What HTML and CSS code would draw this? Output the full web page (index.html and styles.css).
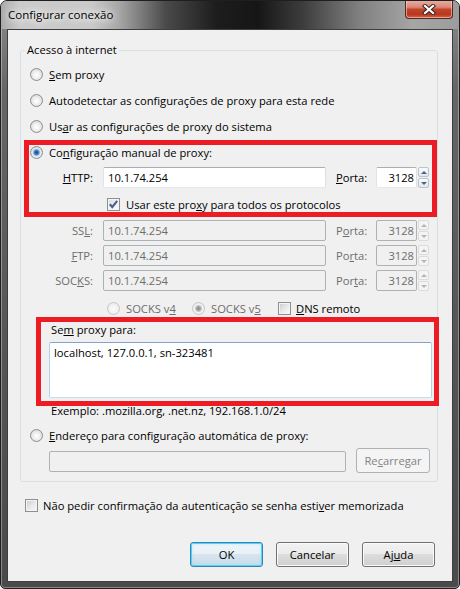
FILE: index.html
```html
<!DOCTYPE html>
<html lang="pt">
<head>
<meta charset="utf-8">
<title>Configurar conexão</title>
<link rel="stylesheet" href="styles.css">
</head>
<body>
<div class="window">
  <div class="titlebar">
    <span class="title">Configurar conexão</span>
    <div class="close">
      <svg width="14" height="11" viewBox="0 0 14 11"><path d="M3 2 L11 9 M11 2 L3 9" stroke="#3a2525" stroke-width="4.2" stroke-linecap="square" fill="none"/><path d="M3 2 L11 9 M11 2 L3 9" stroke="#ffffff" stroke-width="2.2" stroke-linecap="square" fill="none"/></svg>
    </div>
  </div>
  <div class="client">
    <div class="group">
      <span class="legend">Acesso à internet</span>
      <div class="opt"><span class="radio"></span><span><u>S</u>em proxy</span></div>
      <div class="opt"><span class="radio"></span><span>Autodetectar as confi<u>g</u>urações de proxy para esta rede</span></div>
      <div class="opt"><span class="radio"></span><span>Us<u>a</u>r as configurações de proxy do sistema</span></div>
      <div class="mark mark1">
        <div class="opt"><span class="radio on"></span><span>Co<u>n</u>figuração manual de proxy:</span></div>
        <div class="prow first">
          <span class="plabel"><u>H</u>TTP:</span>
          <span class="field">10.1.74.254</span>
          <span class="porta"><u>P</u>orta:</span>
          <span class="field port">3128</span>
          <span class="spin"><span class="sb"><span class="up"></span></span><span class="sb"><span class="down"></span></span></span>
        </div>
        <div class="crow"><span class="chk on"><svg width="11" height="11" viewBox="0 0 11 11"><path d="M1.8 5.2 L4.3 8 L9.2 1.8" fill="none" stroke="#4b5f94" stroke-width="2.1"/></svg></span><span>Usar este pro<u>x</u>y para todos os protocolos</span></div>
      </div>
      <div class="prow dis ssl">
        <span class="plabel">SS<u>L</u>:</span>
        <span class="field">10.1.74.254</span>
        <span class="porta">P<u>o</u>rta:</span>
        <span class="field port">3128</span>
        <span class="spin"><span class="sb"><span class="up"></span></span><span class="sb"><span class="down"></span></span></span>
      </div>
      <div class="prow dis">
        <span class="plabel"><u>F</u>TP:</span>
        <span class="field">10.1.74.254</span>
        <span class="porta">Po<u>r</u>ta:</span>
        <span class="field port">3128</span>
        <span class="spin"><span class="sb"><span class="up"></span></span><span class="sb"><span class="down"></span></span></span>
      </div>
      <div class="prow dis">
        <span class="plabel">SOC<u>K</u>S:</span>
        <span class="field">10.1.74.254</span>
        <span class="porta">Por<u>t</u>a:</span>
        <span class="field port">3128</span>
        <span class="spin"><span class="sb"><span class="up"></span></span><span class="sb"><span class="down"></span></span></span>
      </div>
      <div class="srow">
        <span class="sitem v4 dis"><span class="radio dis"></span><span>SOCKS v<u>4</u></span></span>
        <span class="sitem v5 dis"><span class="radio dis on"></span><span>SOCKS v<u>5</u></span></span>
        <span class="sitem"><span class="chk"></span><span><u>D</u>NS remoto</span></span>
      </div>
      <div class="mark mark2">
        <div class="nlabel">Se<u>m</u> proxy para:</div>
        <div class="area">localhost, 127.0.0.1, sn-323481</div>
      </div>
      <div class="example">Exemplo: .mozilla.org, .net.nz, 192.168.1.0/24</div>
      <div class="opt auto"><span class="radio"></span><span><u>E</u>ndereço para configuração automática de proxy:</span></div>
      <div class="urow">
        <span class="field url dis"></span>
        <span class="btn disabled">Re<u>c</u>arregar</span>
      </div>
    </div>
    <div class="crow bottom"><span class="chk"></span><span>Não pedir confirmação da autenticação se senha esti<u>v</u>er memorizada</span></div>
    <div class="buttons">
      <span class="btn default">OK</span>
      <span class="btn">Cancelar</span>
      <span class="btn">Aj<u>u</u>da</span>
    </div>
  </div>
</div>
</body>
</html>
```
FILE: styles.css
```css
* { box-sizing: border-box; }
html, body { margin: 0; padding: 0; }
body {
  width: 460px;
  height: 589px;
  overflow: hidden;
  background: #ffffff;
  font-family: "Open Sans", "Noto Sans", sans-serif;
  font-size: 11.2px;
  color: #000;
}
u { text-decoration: underline; text-underline-offset: 1px; text-decoration-thickness: 1px; }

.window {
  width: 460px;
  height: 589px;
  border: 1px solid #1f1f1f;
  border-radius: 7px 7px 5px 5px;
  background: linear-gradient(to bottom, #8d8d8d 0, #666666 15%, #555555 60%, #4a4a4a 100%);
  box-shadow: inset 0 0 0 1px rgba(255,255,255,0.35);
  overflow: hidden;
  display: flex;
  flex-direction: column;
}
.titlebar {
  height: 28px;
  flex: none;
  display: flex;
  align-items: flex-start;
  background: linear-gradient(to right, #a9a9a9 0, #cbcbcb 4%, #c9c9c9 20%, #a5a5a5 26%, #4a4a4a 36%, #1d1d1d 47%, #161616 56%, #3d3d3d 66%, #7f7f7f 78%, #a6a6a6 90%, #9c9c9c 100%);
}
.title {
  padding-left: 7px;
  line-height: 28px;
  font-size: 11.5px;
  color: #000;
  text-shadow: 0 0 6px #fff, 0 0 10px rgba(255,255,255,0.9), 0 0 14px rgba(255,255,255,0.7);
}
.close {
  margin-left: auto;
  margin-right: 6px;
  margin-top: -1px;
  width: 48px;
  height: 19px;
  border: 1px solid #4e2a24;
  border-top: none;
  border-radius: 0 0 4px 4px;
  background: linear-gradient(to bottom, #e8b1a6 0, #d98876 40%, #c2442b 52%, #b8371f 80%, #d46448 100%);
  box-shadow: inset 0 0 0 1px rgba(255,220,210,0.55);
  display: flex;
  align-items: center;
  justify-content: center;
}

.client {
  height: 553px;
  flex: none;
  margin: 0 6px;
  border: 1px solid #3e3e3e;
  background: #f0f0f0;
  display: flex;
  flex-direction: column;
}

.group {
  position: relative;
  margin: 20px 14px 0 12px;
  border: 1px solid #d5dfe5;
  border-radius: 3px;
  padding: 10px 0 8px 0;
}
.legend {
  position: absolute;
  top: -9px;
  left: 4px;
  padding: 0 2px;
  line-height: 16px;
  background: #f0f0f0;
}

.opt {
  display: flex;
  align-items: center;
  height: 26px;
  padding-left: 9px;
  gap: 6px;
}
.radio {
  flex: none;
  width: 13px;
  height: 13px;
  border-radius: 50%;
  border: 1px solid #8e8f8f;
  background: radial-gradient(circle at 50% 55%, #ffffff 0, #f3f3f3 35%, #dadada 75%, #c8c8c8 100%);
}
.radio.on {
  background:
    radial-gradient(circle at 50% 50%, #1a4f93 0, #2b6bb6 1.6px, #5c9ad8 2.6px, #a9cdf1 3.4px, rgba(169,205,241,0) 4.1px),
    radial-gradient(circle at 50% 55%, #ffffff 0, #f3f3f3 35%, #dadada 75%, #c8c8c8 100%);
}
.radio.dis {
  border-color: #c5c5c5;
  background: radial-gradient(circle at 50% 55%, #fbfbfb 0, #f2f2f2 50%, #e6e6e6 100%);
}
.radio.dis.on {
  background:
    radial-gradient(circle at 50% 50%, #8a8a8a 0, #a3a3a3 1.8px, #c7c7c7 3px, rgba(200,200,200,0) 4px),
    radial-gradient(circle at 50% 55%, #fbfbfb 0, #f2f2f2 50%, #e6e6e6 100%);
}

.mark { position: relative; }
.mark::after {
  content: "";
  position: absolute;
  border: 5px solid #ed1c24;
  pointer-events: none;
}
.mark1::after { top: 1px; left: 3px; right: 0; bottom: -5px; }
.mark2 { margin-top: 1px; }
.mark2::after { top: 0; left: 15px; right: -2px; bottom: -8px; }

.prow {
  display: flex;
  align-items: center;
  height: 21px;
  margin-top: 4px;
}
.prow.first { margin-top: 2px; }
.prow.ssl { margin-top: 8px; }
.plabel {
  width: 72px;
  text-align: right;
  margin-right: 10px;
}
.field {
  display: block;
  width: 223px;
  height: 21px;
  border: 1px solid;
  border-color: #abadb3 #dbdfe6 #e3e9ef #e2e3ea;
  border-radius: 2px;
  background: #ffffff;
  padding: 0 4px;
  line-height: 19px;
  white-space: nowrap;
}
.porta {
  width: 40px;
  margin-left: 10px;
}
.field.port {
  width: 41px;
  text-align: right;
  padding: 0 2px 0 0;
}
.spin {
  width: 11px;
  height: 21px;
  margin-left: 1px;
  display: flex;
  flex-direction: column;
  gap: 1px;
}
.sb {
  flex: 1;
  border: 1px solid #bcc3cc;
  border-radius: 2px;
  background: linear-gradient(to bottom, #fafbfc, #e2e7ee);
  display: flex;
  align-items: center;
  justify-content: center;
}
.up { width: 0; height: 0; border-left: 3px solid transparent; border-right: 3px solid transparent; border-bottom: 3px solid #4d6185; }
.down { width: 0; height: 0; border-left: 3px solid transparent; border-right: 3px solid transparent; border-top: 3px solid #4d6185; }

.dis { color: #6d6d6d; }
.dis .field, .field.dis {
  background: #f0f0f0;
  border-color: #adb2b5;
  color: #6d6d6d;
}
.dis .sb { border-color: #dcdcdc; background: #f4f4f4; }
.dis .up { border-bottom-color: #b5b5b5; }
.dis .down { border-top-color: #b5b5b5; }

.crow {
  display: flex;
  align-items: center;
  height: 16px;
  margin-top: 8px;
  padding-left: 86px;
  gap: 6px;
}
.chk {
  flex: none;
  width: 13px;
  height: 13px;
  border: 1px solid #8f8f8f;
  background: linear-gradient(135deg, #c6cacf 0, #e9eaec 55%, #f8f8f8 100%);
  box-shadow: inset 0 0 0 1px #f4f4f4;
  display: flex;
  align-items: center;
  justify-content: center;
}
.chk.on {
  background: linear-gradient(135deg, #d7dadf 0, #f0f1f3 55%, #fbfbfb 100%);
}

.srow {
  display: flex;
  align-items: center;
  height: 16px;
  margin-top: 9px;
  padding-left: 86px;
}
.sitem { display: flex; align-items: center; gap: 6px; }
.sitem.v4 { width: 85px; }
.sitem.v5 { width: 86px; }
.sitem .chk { margin-right: -1px; }

.nlabel {
  padding: 5px 0 0 30px;
  line-height: 16px;
}
.area {
  margin: 4px 0 0 28px;
  width: 383px;
  height: 56px;
  border: 1px solid;
  border-color: #7ea4cf #b7cfe8 #c7dbef #b7cfe8;
  border-radius: 2px;
  background: #fff;
  padding: 2px 4px;
  line-height: 16px;
}
.example {
  margin-top: 5px;
  padding-left: 30px;
  line-height: 16px;
}
.opt.auto { margin-top: 3px; }

.urow {
  display: flex;
  align-items: flex-end;
  height: 25px;
  padding-left: 28px;
}
.field.url {
  width: 297px;
  margin-bottom: 1px;
}

.btn {
  display: flex;
  align-items: center;
  justify-content: center;
  width: 73px;
  height: 25px;
  border: 1px solid #707070;
  border-radius: 3px;
  background: linear-gradient(to bottom, #f2f2f2 0, #ebebeb 49%, #dddddd 50%, #cfcfcf 100%);
  box-shadow: inset 0 0 0 1px #fbfbfb;
}
.btn.disabled {
  width: 74px;
  margin-left: 10px;
  border-color: #adb2b5;
  background: #f4f4f4;
  box-shadow: none;
  color: #838383;
}
.btn.default {
  border-color: #3c7fb1;
  box-shadow: inset 0 0 0 1px #48d8fb, inset 0 0 3px 1px rgba(150,220,250,0.5);
  background: linear-gradient(to bottom, #f0f6fa 0, #e8f0f6 49%, #d8e5ef 50%, #c9dbe9 100%);
}

.crow.bottom {
  margin-top: 15px;
  padding-left: 17px;
  gap: 5px;
}
.buttons {
  display: flex;
  justify-content: flex-end;
  gap: 13px;
  margin-top: 29px;
  padding-right: 17px;
}
```
